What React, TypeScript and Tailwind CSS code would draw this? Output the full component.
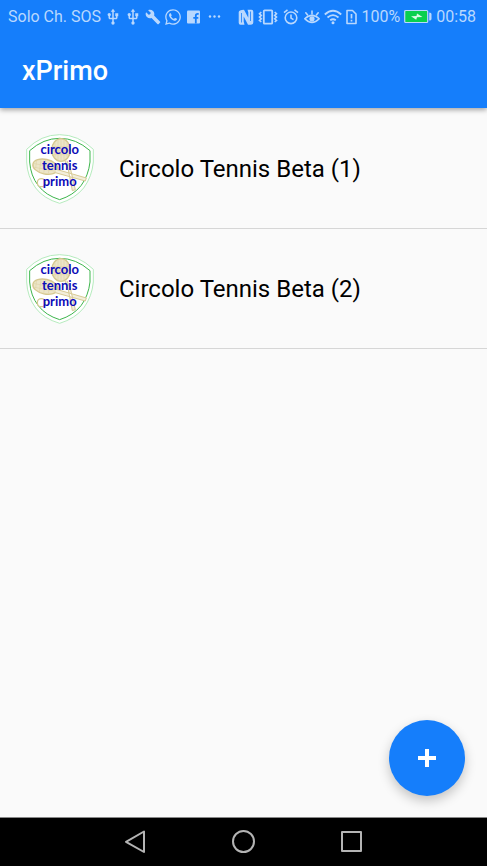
import { FaWhatsapp } from 'react-icons/fa';
import { MdBuild, MdUsb } from 'react-icons/md';

const clubs = [
  { id: 1, name: 'Circolo Tennis Beta (1)' },
  { id: 2, name: 'Circolo Tennis Beta (2)' },
];

function FacebookIcon() {
  return (
    <svg viewBox="0 0 20 20" className="h-5 w-5">
      <rect x="4" y="3.500" width="13" height="13" rx="1" fill="currentColor" />
      <path d="M12.800 16.500V8.800q0-1.900 1.900-1.900h1M10.300 10.800h5" fill="none" stroke="#157efb" strokeWidth="1.800" />
    </svg>
  );
}

function DotsIcon() {
  return (
    <svg viewBox="0 0 20 20" className="h-5 w-5" fill="currentColor">
      <circle cx="7" cy="9.500" r="1.200" />
      <circle cx="11.500" cy="9.500" r="1.200" />
      <circle cx="16" cy="9.500" r="1.200" />
    </svg>
  );
}

function NfcIcon() {
  return (
    <svg viewBox="0 0 16 18" className="h-[18px] w-4">
      <path
        fill="currentColor"
        d="M2 2.500q1.500-.8 4-.8l4.300 8V4.500L9.500 1.800h4q1.800 0 1.800 2v10.400q0 1.800-1.300 2.200-1.500.4-4 .4L5.700 8.500v5l.8 3.200h-4q-1.800 0-1.800-2V4.300Q.7 3 2 2.500z"
      />
      <path d="M3.500 5v9.500M12.500 3.500V13" fill="none" stroke="#157efb" strokeWidth=".8" />
    </svg>
  );
}

function VibrateIcon() {
  return (
    <svg viewBox="0 0 20 18" className="h-[18px] w-5" fill="none" stroke="currentColor" strokeWidth="1.600">
      <rect x="5.800" y="2.300" width="8.400" height="13.400" rx=".8" strokeWidth="1.800" />
      <path d="M3.300 4l-1.800 1.700 1.800 1.700-1.800 1.700 1.800 1.700-1.800 1.700 1.800 1.500M16.700 4l1.800 1.700-1.800 1.700 1.800 1.700-1.800 1.700 1.800 1.700-1.800 1.500" />
    </svg>
  );
}

function AlarmIcon() {
  return (
    <svg viewBox="0 0 18 18" className="h-[18px] w-[18px]" fill="none" stroke="currentColor" strokeWidth="1.600">
      <circle cx="9" cy="9.800" r="5.800" />
      <path d="M2 4.700L5.500 1.900M16 4.700l-3.500-2.800M9 6.500v3.600l2.500 1.500" />
    </svg>
  );
}

function EyeIcon() {
  return (
    <svg viewBox="1 0 16 18" className="h-[18px] w-4" fill="none" stroke="currentColor" strokeWidth="1.600" strokeLinecap="round">
      <path d="M1.800 10.800Q9 3.800 16.200 10.800Q9 18 1.800 10.800z" />
      <circle cx="9" cy="10.800" r="2.600" fill="currentColor" stroke="none" />
      <path d="M9 6V3M4.600 7L2.800 4.800M13.400 7l1.800-2.200" />
    </svg>
  );
}

function WifiIcon() {
  return (
    <svg viewBox="0 0 18 18" className="h-[18px] w-[18px]" fill="none" stroke="currentColor" strokeWidth="1.800">
      <path d="M.8 6.500Q9-1 17.200 6.500M3.500 9.500q5.500-4.700 11 0M6.200 12.300q2.800-2.200 5.600 0" />
      <circle cx="9" cy="14.800" r="1.500" fill="currentColor" stroke="none" />
    </svg>
  );
}

function SimAlertIcon() {
  return (
    <svg viewBox="0 0 11 18" className="h-[18px] w-[11px]" fill="none" stroke="currentColor" strokeWidth="1.600">
      <path d="M1 2.500h5.500L10 6v9.500H1z" strokeLinejoin="round" />
      <path d="M5.500 6v4.500M5.500 11.800v1.700" strokeWidth="1.700" />
    </svg>
  );
}

function BatteryIcon() {
  return (
    <svg viewBox="0 0 28 18" className="h-[18px] w-7">
      <rect x=".7" y="2.500" width="23" height="12" rx="1" fill="#09d04f" stroke="currentColor" strokeWidth="1.200" />
      <path d="M25.200 4.500q2.300 0 2.300 1.500v5q0 1.500-2.300 1.500z" fill="currentColor" />
      <path d="M7 8.200l5.500-.2.500-2.500 5.500 3.500-5.500.2-.8 2.500z" fill="#d9fbe6" />
    </svg>
  );
}

function StatusBar() {
  return (
    <div className="flex h-[34px] items-center justify-between pl-2 pr-[11px] text-base text-[#b9d8fe]">
      <div className="flex items-center">
        <span className="whitespace-nowrap pr-0.5">Solo Ch. SOS</span>
        <MdUsb className="h-[18px] w-5" />
        <MdUsb className="h-[18px] w-5" />
        <MdBuild className="h-4 w-5" />
        <FaWhatsapp className="h-[18px] w-5" />
        <FacebookIcon />
        <DotsIcon />
      </div>
      <div className="flex items-center gap-1">
        <NfcIcon />
        <VibrateIcon />
        <AlarmIcon />
        <EyeIcon />
        <WifiIcon />
        <SimAlertIcon />
        <span>100%</span>
        <BatteryIcon />
        <span>00:58</span>
      </div>
    </div>
  );
}

function ClubLogo() {
  return (
    <svg viewBox="0 0 210 210" className="h-[70px] w-[70px] shrink-0">
      <path d="M5 46Q48 2 104 2Q160 2 205 46L205 84Q201 128 176 162Q150 194 104 208Q56 194 32 162Q7 128 5 84z" fill="#fff" stroke="#b5ebbd" strokeWidth="3" />
      <path d="M14 50Q55 13 104 13Q153 13 195 50L195 84Q190 126 168 155Q145 184 104 197Q62 184 40 155Q17 126 14 84z" fill="#fff" stroke="#3db54c" strokeWidth="3" />
      {/* rackets and ball */}
      <g fill="#ece5c8" stroke="#d6c88f" strokeWidth="4">
        <ellipse cx="108" cy="48" rx="28" ry="34" />
        <ellipse cx="61" cy="98" rx="38" ry="22" transform="rotate(12 61 98)" />
        <circle cx="49" cy="146" r="12" fill="#fff" />
      </g>
      <g fill="none" stroke="#dccf9f" strokeWidth="1.500">
        <path d="M90 26v44M99 17v62M108 14v68M117 17v62M126 26v44M82 38h52M81 50h54M84 62h48" />
        <path d="M35 78l-3 24M48 76l-5 38M62 78l-6 41M76 82l-6 37M24 88l70 14M25 99l66 13" />
      </g>
      <path d="M120 80l10 28 12 62 9-3-14-60-11-27M94 106l90 26-3 9-90-25" fill="#f3eedb" stroke="#d8cb96" strokeWidth="3" />
      <g fill="#0c0cb8" textAnchor="middle" fontSize="39" className="font-['Lato',sans-serif] font-bold">
        <text x="104" y="60">circolo</text>
        <text x="104" y="108">tennis</text>
        <text x="104" y="156">primo</text>
      </g>
    </svg>
  );
}

function NavBar() {
  const iconClass = 'h-7 w-7 fill-none stroke-[#b4b4b4] stroke-2';
  return (
    <nav className="flex h-[49px] items-center justify-center gap-20 border-t border-[#888] bg-black">
      <button aria-label="Back">
        <svg viewBox="0 0 28 28" className={iconClass} strokeLinejoin="round">
          <path d="M22 3.500v20.500L4 13.800z" />
        </svg>
      </button>
      <button aria-label="Home">
        <svg viewBox="0 0 28 28" className={iconClass}>
          <circle cx="13.500" cy="13.500" r="10.500" />
        </svg>
      </button>
      <button aria-label="Recent apps">
        <svg viewBox="0 0 28 28" className={iconClass} strokeLinejoin="round">
          <rect x="4" y="4" width="19" height="19" />
        </svg>
      </button>
    </nav>
  );
}

export default function App() {
  return (
    <div className="flex min-h-screen flex-col bg-[#fafafa] font-['Roboto',sans-serif]">
      <header className="relative bg-[#157efb] shadow-[0_2px_5px_rgba(0,0,0,0.35)]">
        <StatusBar />
        <div className="flex h-[74px] items-center px-[22px]">
          <h1 className="text-[27px] font-medium text-white">xPrimo</h1>
        </div>
      </header>

      <main className="relative flex-1">
        <ul className="pt-px">
          {clubs.map((club) => (
            <li key={club.id} className="border-b border-[#d6d6d6]">
              <a href={`#club-${club.id}`} className="flex h-[119px] items-center gap-6 px-[25px]">
                <ClubLogo />
                <span className="text-2xl text-black">{club.name}</span>
              </a>
            </li>
          ))}
        </ul>

        <button
          aria-label="Add club"
          className="absolute bottom-[21px] right-[22px] flex h-[76px] w-[76px] items-center justify-center rounded-full bg-[#157efb] shadow-[0_5px_12px_rgba(0,0,0,0.22)]"
        >
          <svg viewBox="0 0 18 18" className="h-[18px] w-[18px] fill-white">
            <path d="M7 0h4v7h7v4h-7v7H7v-7H0V7h7z" />
          </svg>
        </button>
      </main>

      <NavBar />
    </div>
  );
}
